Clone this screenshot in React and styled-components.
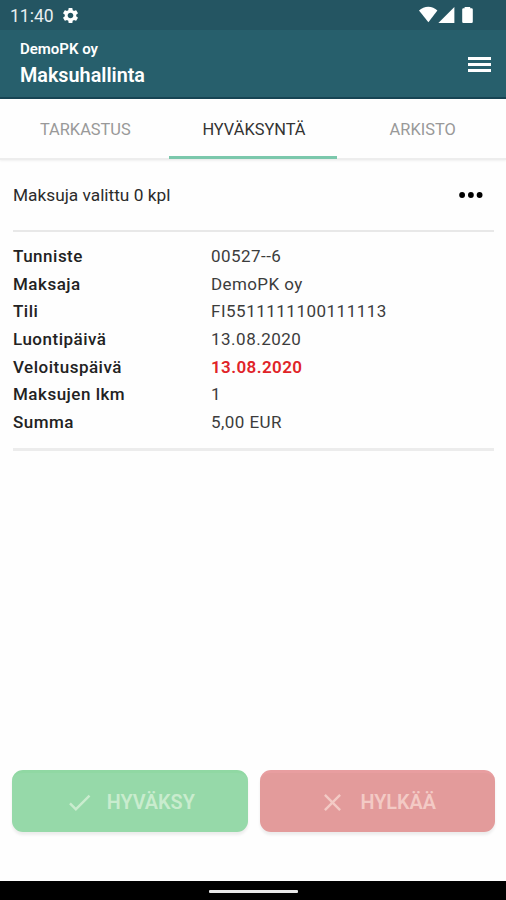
import React from 'react';
import styled, { createGlobalStyle } from 'styled-components';
import { MdSettings, MdCheck, MdClose } from 'react-icons/md';

const payment = [
    { label: 'Tunniste', value: '00527--6', spacing: 0.45 },
    { label: 'Maksaja', value: 'DemoPK oy', spacing: 0.4 },
    { label: 'Tili', value: 'FI5511111100111113', spacing: 0.5 },
    { label: 'Luontipäivä', value: '13.08.2020', spacing: 0.5 },
    { label: 'Veloituspäivä', value: '13.08.2020', due: true, spacing: 0.4 },
    { label: 'Maksujen lkm', value: '1', spacing: 0.5 },
    { label: 'Summa', value: '5,00 EUR', spacing: 0.45 },
];

const App = () => {
    return (
        <>
            <GlobalStyle />
            <Screen>
                <StatusBar>
                    <Clock>11:40</Clock>
                    <MdSettings size={19} />
                    <StatusIcons width="54" height="18" viewBox="0 0 54 18">
                        <path d="M0 4.6C5 -0.6 13.6 -0.6 18.4 4.6L9.4 16.3Z" />
                        <path d="M19.4 17L35.4 1V17Z" />
                        <path d="M45.6 2.2V1H51.2V2.2H53Q53.8 2.4 53.8 3.4V15.8Q53.8 17 52.6 17H44.4Q43.2 17 43.2 15.8V3.4Q43.2 2.4 44 2.2Z" />
                    </StatusIcons>
                </StatusBar>
                <Header>
                    <div>
                        <Company>DemoPK oy</Company>
                        <Title>Maksuhallinta</Title>
                    </div>
                    <MenuButton aria-label="Valikko">
                        <span />
                        <span />
                        <span />
                    </MenuButton>
                </Header>
                <Tabs>
                    <Tab>TARKASTUS</Tab>
                    <Tab $active>HYVÄKSYNTÄ</Tab>
                    <Tab>ARKISTO</Tab>
                </Tabs>
                <Content>
                    <Selection>
                        <span>Maksuja valittu 0 kpl</span>
                        <MoreButton aria-label="Lisää">
                            <svg width="24" height="6" viewBox="0 0 24 6">
                                <circle cx="3.1" cy="3" r="2.9" />
                                <circle cx="11.9" cy="3" r="2.9" />
                                <circle cx="20.6" cy="3" r="2.9" />
                            </svg>
                        </MoreButton>
                    </Selection>
                    <Details>
                        {payment.map((row) => (
                            <React.Fragment key={row.label}>
                                <Label>{row.label}</Label>
                                <Value $due={row.due} $spacing={row.spacing}>{row.value}</Value>
                            </React.Fragment>
                        ))}
                    </Details>
                </Content>
                <Actions>
                    <ActionButton $color="#96d9a9" $edge="#90d8a3" $text="#c9ecce">
                        <MdCheck size={29} />
                        HYVÄKSY
                    </ActionButton>
                    <ActionButton $color="#e39b9b" $edge="#e89ea0" $text="#f3cac5">
                        <MdClose size={29} />
                        HYLKÄÄ
                    </ActionButton>
                </Actions>
                <NavBar>
                    <Handle />
                </NavBar>
            </Screen>
        </>
    );
};

const GlobalStyle = createGlobalStyle`
    * {
        box-sizing: border-box;
    }

    body {
        margin: 0;
        background: #fefefe;
    }
`

const Screen = styled.div`
    display: flex;
    flex-direction: column;
    width: 506px;
    height: 900px;
    overflow: hidden;
    background: #fefefe;
    color: #2b2b2b;
    font-family: Roboto, sans-serif;
`

const StatusBar = styled.div`
    display: flex;
    align-items: center;
    height: 30px;
    padding: 1px 33px 0 10px;
    background: #245562;
    color: #fff;
`

const Clock = styled.span`
    width: 51px;
    font-size: 17.5px;
    line-height: 20px;
    color: #e8eff1;
`

const StatusIcons = styled.svg`
    margin-left: auto;
    margin-bottom: 1px;
    fill: #fff;
`

const Header = styled.header`
    display: flex;
    align-items: center;
    justify-content: space-between;
    height: 69px;
    padding: 0 15px 0 20px;
    background: #275f6c;
    border-bottom: 2px solid #174453;
    color: #fff;
`

const Company = styled.div`
    margin-top: 2px;
    font-size: 15px;
    font-weight: 600;
    line-height: 20px;
`

const Title = styled.h1`
    margin: 3px 0 0;
    font-size: 19.8px;
    font-weight: 600;
    line-height: 28px;
`

const MenuButton = styled.button`
    display: flex;
    flex-direction: column;
    gap: 3px;
    width: 23px;
    padding: 0;
    margin-top: 2px;
    border: 0;
    background: none;

    span {
        height: 3px;
        background: #fff;
    }
`

const Tabs = styled.nav`
    display: grid;
    grid-template-columns: repeat(3, 1fr);
    flex: none;
    height: 61px;
    border-bottom: 2px solid #ededed;
    box-shadow: 0 1px 2px rgba(0, 0, 0, 0.06);
`

const Tab = styled.div`
    display: flex;
    align-items: center;
    justify-content: center;
    height: 60px;
    padding-top: ${({ $active }) => ($active ? '4px' : '1px')};
    padding-left: 2px;
    border-bottom: ${({ $active }) => ($active ? '3px solid #7bc8ac' : '0')};
    color: ${({ $active }) => ($active ? '#333' : '#999')};
    font-size: 16.4px;
`

const Content = styled.main`
    flex: 1;
    padding: 0 12px 0 13px;
`

const Selection = styled.div`
    display: flex;
    align-items: center;
    justify-content: space-between;
    height: 72px;
    padding: 0 11px 0 0;
    border-bottom: 2px solid #e8e8e8;
    font-size: 17.3px;
`

const MoreButton = styled.button`
    display: flex;
    padding: 0 0 1px;
    border: 0;
    background: none;
`

const Details = styled.dl`
    display: grid;
    grid-template-columns: 198px 1fr;
    grid-auto-rows: 27.65px;
    align-items: center;
    margin: 0;
    padding: 10.2px 0 12.2px;
    border-bottom: 3px solid #ececec;
    font-size: 17px;
`

const Label = styled.dt`
    color: #222;
    font-weight: 500;
    letter-spacing: 0.5px;
`

const Value = styled.dd`
    margin: 0;
    color: ${({ $due }) => ($due ? '#e02328' : '#3c3c3c')};
    font-weight: ${({ $due }) => ($due ? 600 : 400)};
    letter-spacing: ${({ $spacing }) => $spacing}px;
`

const Actions = styled.div`
    display: grid;
    grid-template-columns: 1fr 1fr;
    gap: 12px;
    padding: 0 11px 49px 12px;
`

const ActionButton = styled.button`
    display: flex;
    align-items: center;
    justify-content: center;
    gap: 13px;
    height: 62px;
    padding: 0 0 1px;
    border: 0;
    border-top: 3px solid ${({ $edge }) => $edge};
    border-radius: 11px;
    background: ${({ $color }) => $color};
    box-shadow: 0 3px 3px rgba(0, 0, 0, 0.07);
    color: ${({ $text }) => $text};
    font: 600 19.8px Roboto, sans-serif;
`

const NavBar = styled.footer`
    display: flex;
    justify-content: center;
    height: 19px;
    padding-top: 9px;
    background: #000;
`

const Handle = styled.div`
    width: 89px;
    height: 3px;
    border-radius: 1px;
    background: #e8e8e8;
`

export default App;
